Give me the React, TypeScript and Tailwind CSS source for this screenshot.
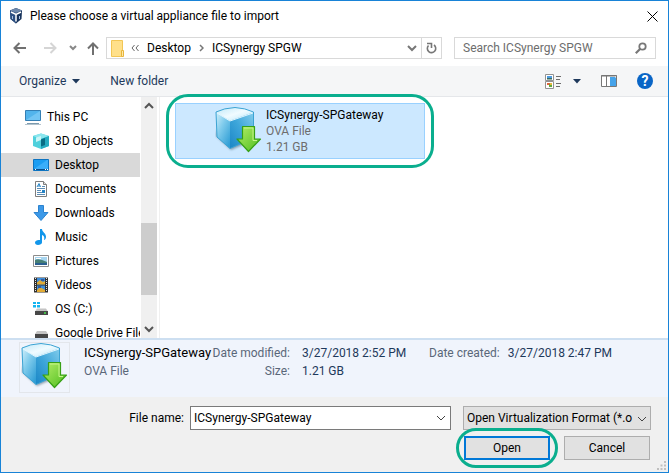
import type { ReactNode } from "react";

function LogoIcon() {
  return (
    <svg width="16" height="16" viewBox="0 0 16 16" aria-hidden="true">
      <path d="M8 0 14 2.500 13.500 11 8 15.500 2.500 11 2 2.500z" fill="#17335c" />
      <path d="M8 0 14 2.500 8 5 2 2.500z" fill="#6d87ab" />
      <path d="M2 2.500 8 5v10.500L2.500 11z" fill="#2c4f82" />
      <path d="m3 4 5 2.500L13 4M8 6.500v7" stroke="#fff" strokeWidth="1.500" fill="none" />
      <path d="M4.500 8v3M11.500 8v3" stroke="#a9c3e4" strokeWidth="1" />
    </svg>
  );
}

function CubeIcon({ id, size }: { id: string; size: number }) {
  const top = `${id}-top`;
  const left = `${id}-left`;
  const right = `${id}-right`;
  const arrow = `${id}-arrow`;
  const shade = `${id}-shade`;
  return (
    <svg width={size} height={size} viewBox="0 0 48 48" aria-hidden="true">
      <defs>
        <linearGradient id={top} x1="0" y1="0" x2="1" y2="1">
          <stop offset="0" stopColor="#bfe8f8" />
          <stop offset=".5" stopColor="#f0fbff" />
          <stop offset="1" stopColor="#b9e6f8" />
        </linearGradient>
        <linearGradient id={left} x1="0" y1="0" x2=".8" y2="1">
          <stop offset="0" stopColor="#d3f0fb" />
          <stop offset=".45" stopColor="#7fcbec" />
          <stop offset="1" stopColor="#319fd6" />
        </linearGradient>
        <linearGradient id={right} x1="1" y1="0" x2="0" y2="1">
          <stop offset="0" stopColor="#83cdec" />
          <stop offset=".5" stopColor="#3ea6da" />
          <stop offset="1" stopColor="#1b86c6" />
        </linearGradient>
        <linearGradient id={arrow} x1="0" y1="0" x2="1" y2="1">
          <stop offset="0" stopColor="#b5ee68" />
          <stop offset="1" stopColor="#4dbd1e" />
        </linearGradient>
        <filter id={shade} x="-20%" y="-20%" width="140%" height="140%">
          <feGaussianBlur stdDeviation="1" />
        </filter>
      </defs>
      <path d="M1 29 16 43 32 36V20L2 23z" fill="#51697c" opacity=".6" filter={`url(#${shade})`} />
      <path d="M1 5 15 13.500V41.500L2 30z" fill={`url(#${left})`} />
      <path d="M15 13.500 38.500 5v26L15 41.500z" fill={`url(#${right})`} />
      <path d="M1 5Q9 1 20 .5 30 1 38.500 5L15 13.500z" fill={`url(#${top})`} />
      <path d="M1 5Q9 1 20 .5 30 1 38.500 5V31L15 41.500 2 30z" fill="none" stroke="#3ba3d3" strokeWidth="1" />
      <path d="M2 6 15 14 38 6" fill="none" stroke="#e2f7ff" strokeWidth="1" />
      <path d="M27.500 19.500h12V32h6L33.500 44.500 22 32h5.500z" fill={`url(#${arrow})`} stroke="#37a016" strokeWidth="1.200" strokeLinejoin="round" />
      <path d="M29 21h9v12.500h4" fill="none" stroke="#c6f58b" strokeWidth="1" />
    </svg>
  );
}

function Chevron({ className = "", w = 2 }: { className?: string; w?: number }) {
  return (
    <svg className={className} width="10" height="10" viewBox="0 0 10 10" fill="none" stroke="currentColor" strokeWidth={w} aria-hidden="true">
      <path d="m1 3 4 4 4-4" />
    </svg>
  );
}

function Caret() {
  return (
    <svg width="8" height="5" viewBox="0 0 8 5" aria-hidden="true">
      <path d="M0 0h8L4 4.500z" fill="#1e395b" />
    </svg>
  );
}

function Small({ children }: { children: ReactNode }) {
  return (
    <svg className="shrink-0" width="16" height="16" viewBox="0 0 16 16" aria-hidden="true">
      {children}
    </svg>
  );
}

const pc = (
  <Small>
    <path d="M.5 1.500h15v10H.5z" fill="#52b4ec" stroke="#357fb4" />
    <path d="M1 11 15 2v9z" fill="#72c5f4" />
    <path d="M2 14.500h12" stroke="#7b9aae" />
    <path d="M0 15.500h16" stroke="#b4c4ce" />
  </Small>
);
const objects3d = (
  <Small>
    <path d="M0 3 8 .5 16 3v10l-8 3-8-3z" fill="#4fd0dc" />
    <path d="M0 3 8 .5 16 3 8 6z" fill="#8be6ee" />
    <path d="M3 4.500 8 3v4L3 9z" fill="#c9f5f7" />
    <path d="M8 6 16 3v10l-8 3z" fill="#23abc0" />
    <path d="M8 6.500 12 5v7l-4 1.500z" fill="#086c84" />
  </Small>
);
const desktop = (
  <Small>
    <path d="M.5 2.500h15v11H.5z" fill="#1b9df2" stroke="#0d73c0" />
    <path d="M1 12 14 3h1v9z" fill="#3aaefa" />
    <path d="M1 12.500h14" stroke="#0a4f8e" />
    <path d="M2 12.500h1M12 12.500h1M14 12.500h1" stroke="#fff" />
  </Small>
);
const documents = (
  <Small>
    <path d="M2.500.5h8l3 3v12h-11z" fill="#fff" stroke="#7d7d7d" />
    <path d="M10.500.5v3h3" fill="#ddd" stroke="#7d7d7d" />
    <path d="m4 6 2-3.500L7.500 6M5 5h2" stroke="#2483c5" fill="none" />
    <path d="M9 5.500h3M4 7.500h8M4 9.500h4M4 11.500h8M4 13.500h8" stroke="#5d8db5" />
    <path d="M9 9h3v3H9z" fill="#2483c5" />
  </Small>
);
const downloads = (
  <Small>
    <path d="M5.500.5h5v7H15l-7 8-7-8h4.500z" fill="#3c99e8" stroke="#2c83cf" />
  </Small>
);
const music = (
  <Small>
    <path d="M7 0h2c0 3 4 4 4 8 0 1.500-1 3-2 3 1-3-.5-4.500-2-5v7.500C9 15 7 16 5 16s-3-1-3-2.500S4 11 5.500 11H7z" fill="#1296ea" />
  </Small>
);
const pictures = (
  <Small>
    <path d="M.5 2.500h15v11H.5z" fill="#fff" stroke="#8c8c8c" />
    <path d="M2 4h12v8H2z" fill="#a7d5f0" />
    <path d="M2 7q4-2 12 2v3H2z" fill="#477f76" />
    <path d="M2 10h12v2H2z" fill="#2b5f91" />
    <path d="M3 5.500h5" stroke="#fff" />
  </Small>
);
const videos = (
  <Small>
    <path d="M1 .5h14v15H1z" fill="#303030" />
    <path d="M2.500 1v14M13.500 1v14" stroke="#e5e5e5" strokeDasharray="1 1" />
    <path d="M4 1h8v6.500H4zM4 8.500h8V15H4z" fill="#3d8edb" />
    <path d="M4 5.500 7 3l3 2 2-1v3.500H4zM4 13l3-3 5 3v2H4z" fill="#e1ab35" />
    <path d="M8 2h3v2H8zM5 9h3v2H5z" fill="#345a9b" />
  </Small>
);
const drive = (
  <Small>
    <path d="M0 1h3v2H0zM4 1h3v2H4zM0 4h3v2.500H0zM4 4h3v2.500H4z" fill="#13b4f0" />
    <path d="M4 7.500h9l2 3H2z" fill="#c4c4c4" />
    <path d="M2 10h13v4H2z" fill="#474747" />
    <path d="M11 12h2" stroke="#45e04c" strokeWidth="1.500" />
  </Small>
);
const gdrive = (
  <Small>
    <path d="M4 6h9l2 3H2z" fill="#c4c4c4" />
    <path d="M2 9h13v4H2z" fill="#474747" />
  </Small>
);

const places: { label: string; icon: ReactNode; active?: boolean }[] = [
  { label: "3D Objects", icon: objects3d },
  { label: "Desktop", icon: desktop, active: true },
  { label: "Documents", icon: documents },
  { label: "Downloads", icon: downloads },
  { label: "Music", icon: music },
  { label: "Pictures", icon: pictures },
  { label: "Videos", icon: videos },
  { label: "OS (C:)", icon: drive },
  { label: "Google Drive File", icon: gdrive },
];

function TitleBar() {
  return (
    <header className="flex h-8 shrink-0 items-center pb-0.5 pl-[7px] pr-1">
      <LogoIcon />
      <h1 className="ml-1.5 flex-1 whitespace-nowrap">Please choose a virtual appliance file to import</h1>
      <button type="button" aria-label="Close" className="flex h-6 w-6 items-center justify-center">
        <svg width="11" height="11" viewBox="0 0 11 11" stroke="#000" fill="none" aria-hidden="true">
          <path d="m.5.5 10 10m0-10-10 10" />
        </svg>
      </button>
    </header>
  );
}

function NavBar() {
  return (
    <nav className="flex h-[33px] shrink-0 items-center pb-[7px] pl-3 pr-3 pt-1 text-[#666]">
      <button type="button" aria-label="Back">
        <svg width="14" height="12" viewBox="0 0 14 12" fill="none" stroke="#707070" strokeWidth="2" aria-hidden="true">
          <path d="M13 6H2M6.500 1l-5 5 5 5" />
        </svg>
      </button>
      <button type="button" aria-label="Forward" className="ml-4">
        <svg width="14" height="12" viewBox="0 0 14 12" fill="none" stroke="#d5d5d5" strokeWidth="2" aria-hidden="true">
          <path d="M1 6h11M7.500 1l5 5-5 5" />
        </svg>
      </button>
      <button type="button" aria-label="Recent locations" className="ml-3">
        <svg width="8" height="8" viewBox="0 0 8 8" fill="none" stroke="#888" strokeWidth="2" aria-hidden="true">
          <path d="m1 2 3 3 3-3" />
        </svg>
      </button>
      <button type="button" aria-label="Up" className="ml-2.5">
        <svg width="12" height="13" viewBox="0 0 12 13" fill="none" stroke="#707070" strokeWidth="2" aria-hidden="true">
          <path d="M6 13V2M1 6.500l5-5 5 5" />
        </svg>
      </button>
      <div className="ml-[7px] flex h-[22px] flex-1 items-center border border-[#d9d9d9] pl-1 text-black">
        <svg width="14" height="17" viewBox="0 0 14 17" aria-hidden="true">
          <path d="M.5.5h11v16H.5z" fill="#ffe08a" stroke="#f2c655" />
          <path d="M10.500 10.500h2v6h-2z" fill="#ffe9a8" stroke="#e8b63c" />
        </svg>
        <svg className="ml-1.5" width="8" height="8" viewBox="0 0 8 8" fill="none" stroke="#666" aria-hidden="true">
          <path d="M3.500 1 1 4l2.500 3M7.500 1 5 4l2.500 3" />
        </svg>
        <button type="button" className="ml-2">Desktop</button>
        <svg className="ml-2" width="5" height="8" viewBox="0 0 5 8" fill="none" stroke="#777" strokeWidth="1.500" aria-hidden="true">
          <path d="m1 1 3 3-3 3" />
        </svg>
        <button type="button" className="ml-2 whitespace-nowrap">ICSynergy SPGW</button>
        <span className="flex-1" />
        <button type="button" aria-label="Previous locations" className="mr-1 text-[#777]">
          <Chevron />
        </button>
        <button type="button" aria-label="Refresh" className="flex h-full w-5 items-center justify-center border-l border-[#d9d9d9]">
          <svg width="11" height="12" viewBox="0 0 11 12" fill="none" stroke="#777" strokeWidth="1.600" aria-hidden="true">
            <path d="M2.500 3.500a4.200 4.200 0 1 0 5.500-.5M1 1.500h4.500V6" />
          </svg>
        </button>
      </div>
      <label className="ml-3 flex h-[22px] w-[202px] items-center border border-[#d9d9d9] pl-2 pr-2">
        <input type="search" aria-label="Search" placeholder="Search ICSynergy SPGW" className="w-full min-w-0 flex-1 bg-transparent outline-none placeholder:text-[#6d6d6d]" />
        <svg width="12" height="12" viewBox="0 0 12 12" fill="none" stroke="#777" strokeWidth="1.800" aria-hidden="true">
          <circle cx="7.500" cy="4.500" r="3.200" />
          <path d="M5 7 .8 11.200" strokeWidth="2.200" />
        </svg>
      </label>
    </nav>
  );
}

function Toolbar() {
  return (
    <div className="flex h-[31px] shrink-0 items-center border-b border-[#e5e7ea] bg-[#f5f6f7] pl-[18px] pr-[15px] text-[#1e395b]">
      <button type="button" className="flex items-center gap-1.5">
        Organize
        <Caret />
      </button>
      <button type="button" className="ml-[30px] whitespace-nowrap">New folder</button>
      <span className="flex-1" />
      <button type="button" aria-label="Change your view" className="flex items-center gap-3">
        <svg width="16" height="15" viewBox="0 0 16 15" fill="none" aria-hidden="true">
          <path d="M.5.5h8v6h-8zM.5 7.500h8v7h-8z" fill="#fff" stroke="#929292" />
          <path d="M2 2h5v2H2z" fill="#4d9be0" />
          <path d="M2 4h5v1.500H2z" fill="#386c62" />
          <path d="M2 9h3v2H2z" fill="#e0633a" />
          <path d="M4 10h3v3H4z" fill="#63a73c" />
          <path d="M5 9h2v2H5z" fill="#e6b93c" />
          <path d="M11 2.500h5M11 5.500h4M11 9.500h5M11 12.500h4" stroke="#6d6d6d" />
        </svg>
        <Caret />
      </button>
      <button type="button" aria-label="Show the preview pane" className="ml-5">
        <svg width="16" height="12" viewBox="0 0 16 12" aria-hidden="true">
          <path d="M.5.5h15v11H.5z" fill="#fff" stroke="#777" />
          <path d="M0 1h16M5.500 1v10" stroke="#777" />
          <path d="M9 2h6v9H9z" fill="#45a3ea" />
          <path d="M14 2h1" stroke="#fff" />
        </svg>
      </button>
      <button type="button" aria-label="Get help" className="ml-5 h-4 w-4 rounded-full bg-[#0965c6] text-center text-[14px] font-bold leading-4 text-white">
        ?
      </button>
    </div>
  );
}

function Sidebar() {
  return (
    <aside className="flex w-[159px] shrink-0 border-r border-[#f0f0f0]">
      <ul className="min-w-0 flex-1 overflow-hidden pt-2">
        <li className="flex h-6 items-center gap-1.5 whitespace-nowrap pl-6">
          {pc}
          This PC
        </li>
        {places.map((p) => (
          <li key={p.label} className={`mr-px flex h-6 items-center gap-1.5 overflow-hidden whitespace-nowrap pl-8 ${p.active ? "bg-[#d9d9d9]" : ""}`}>
            {p.icon}
            {p.label}
          </li>
        ))}
      </ul>
      <div className="mr-0.5 flex w-4 shrink-0 flex-col items-center bg-[#f0f0f0] text-[#555]">
        <span className="flex h-[18px] items-center"><Chevron className="rotate-180" /></span>
        <span className="h-[108px]" />
        <span className="h-[72px] w-full bg-[#cdcdcd]" />
        <span className="flex-1" />
        <span className="flex h-[18px] items-center"><Chevron /></span>
      </div>
    </aside>
  );
}

function Details() {
  return (
    <section className="flex h-[59px] shrink-0 border-t-2 border-[#cddff1] bg-[#f0f4fc] pl-[18px] pt-0.5 leading-[18px] text-[#5a6779]">
      <div className="h-[51px] w-[51px] border border-[#e3e6eb] pl-px">
        <CubeIcon id="preview" size={48} />
      </div>
      <div className="ml-3.5 w-[128px] whitespace-nowrap pt-0.5">
        <p className="text-[13px] text-black">ICSynergy-SPGateway</p>
        <p>OVA File</p>
      </div>
      <dl className="grid grid-cols-[78px_97px] content-start gap-x-3 whitespace-nowrap pt-0.5">
        <dt className="text-right">Date modified:</dt>
        <dd className="text-[#1e395b]">3/27/2018 2:52 PM</dd>
        <dt className="text-right">Size:</dt>
        <dd className="text-[#1e395b]">1.21 GB</dd>
      </dl>
      <dl className="ml-[30px] flex gap-2 whitespace-nowrap pt-0.5">
        <dt>Date created:</dt>
        <dd className="text-[#1e395b]">3/27/2018 2:47 PM</dd>
      </dl>
    </section>
  );
}

function Footer() {
  return (
    <footer className="flex shrink-0 flex-col bg-[#f0f0f0] pb-3 pr-[17px] pt-[9px]">
      <div className="flex items-center gap-3">
        <div className="flex flex-1 items-center">
          <label htmlFor="filename" className="mr-1.5 w-[183px] text-right">File name:</label>
          <div className="flex h-6 flex-1 items-center border border-[#7a7a7a] bg-white pr-1">
            <input id="filename" type="text" defaultValue="ICSynergy-SPGateway" className="w-full min-w-0 flex-1 bg-transparent pl-[3px] outline-none" />
            <button type="button" aria-label="Show file names" className="text-[#444]"><Chevron w={1} /></button>
          </div>
        </div>
        <div className="relative w-[188px]">
          <select aria-label="File type" className="h-6 w-full appearance-none border border-[#adadad] bg-[#e1e1e1] pl-[3px] pr-4 outline-none">
            <option>Open Virtualization Format (*.o</option>
          </select>
          <Chevron w={1} className="pointer-events-none absolute right-1 top-2 text-[#444]" />
        </div>
      </div>
      <div className="mt-1.5 flex justify-end gap-3.5 pr-px">
        <div className="relative">
          <button type="submit" className="h-6 w-[86px] border-2 border-[#0078d7] bg-[#e1e1e1]">Open</button>
          <span className="pointer-events-none absolute -inset-2 rounded-[20px] border-3 border-[#0aae8e]" />
        </div>
        <button type="button" className="h-6 w-[86px] border border-[#adadad] bg-[#e1e1e1]">Cancel</button>
      </div>
    </footer>
  );
}

export default function App() {
  return (
    <div className="relative flex h-screen flex-col overflow-hidden border border-[#1883d7] bg-white font-[Roboto,'Open_Sans',sans-serif] text-[12px] leading-4 text-black">
      <TitleBar />
      <NavBar />
      <Toolbar />
      <main className="flex min-h-0 flex-1">
        <Sidebar />
        <div className="min-w-0 flex-1 pl-[15px] pt-1.5">
          <button type="button" className="relative flex h-14 w-[250px] border border-[#99d1ff] bg-[#cce8ff] pl-[39px] pt-[3px] text-left">
            <CubeIcon id="file" size={48} />
            <span className="ml-[3px] whitespace-nowrap text-[#6d6d6d]">
              <span className="block text-black">ICSynergy-SPGateway</span>
              <span className="block">OVA File</span>
              <span className="block">1.21 GB</span>
            </span>
            <span className="pointer-events-none absolute -inset-2.5 rounded-[22px] border-3 border-[#0aae8e]" />
          </button>
        </div>
      </main>
      <Details />
      <Footer />
      <svg className="absolute bottom-0.5 right-0.5" width="9" height="9" viewBox="0 0 9 9" fill="#bfbfbf" aria-hidden="true">
        <path d="M7 0h2v2H7zM7 3.500h2v2H7zM3.500 3.500h2v2h-2zM7 7h2v2H7zM3.500 7h2v2h-2zM0 7h2v2H0z" />
      </svg>
    </div>
  );
}
